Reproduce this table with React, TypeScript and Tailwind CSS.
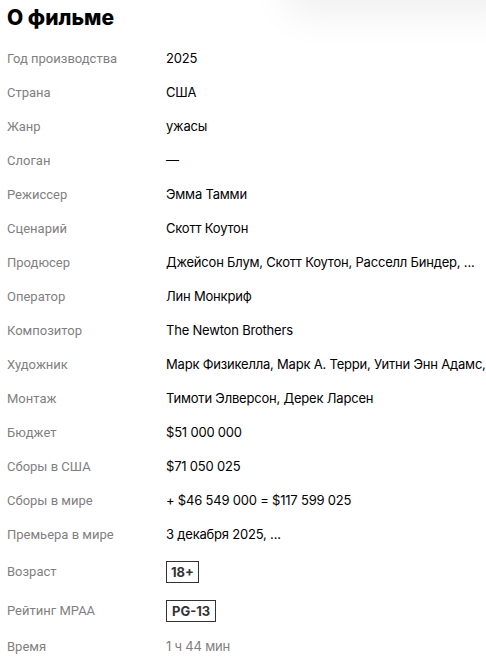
const rows: [string, string][] = [
  ["Год производства", "2025"],
  ["Страна", "США"],
  ["Жанр", "ужасы"],
  ["Слоган", "—"],
  ["Режиссер", "Эмма Тамми"],
  ["Сценарий", "Скотт Коутон"],
  ["Продюсер", "Джейсон Блум, Скотт Коутон, Расселл Биндер, ..."],
  ["Оператор", "Лин Монкриф"],
  ["Композитор", "The Newton Brothers"],
  ["Художник", "Марк Физикелла, Марк А. Терри, Уитни Энн Адамс, ..."],
  ["Монтаж", "Тимоти Элверсон, Дерек Ларсен"],
  ["Бюджет", "$51 000 000"],
  ["Сборы в США", "$71 050 025"],
  ["Сборы в мире", "+ $46 549 000 = $117 599 025"],
  ["Премьера в мире", "3 декабря 2025, ..."],
];

function Row({ label, children, h = "h-[34px]" }: { label: string; children: React.ReactNode; h?: string }) {
  return (
    <div className={`flex items-center ${h}`}>
      <div className="w-[159px] shrink-0 font-['Roboto',sans-serif] text-[13px] text-[#7f7f7f]">{label}</div>
      <div className="min-w-0 flex-1 whitespace-nowrap text-[13px] tracking-[-0.2px] text-black">{children}</div>
    </div>
  );
}

export default function App() {
  return (
    <div className="relative h-[661px] w-[486px] overflow-hidden bg-white pl-[7px] font-['Inter','Roboto',sans-serif]">
      {/* shadow from the header above */}
      <div className="absolute -top-[40px] left-[300px] -right-[20px] h-[40px] shadow-[0_0_40px_12px_rgba(0,0,0,0.07)]" />
      <h2 className="flex h-[42px] items-center pb-[6px] text-[21px] font-extrabold text-black">О фильме</h2>
      {rows.map(([l, v]) => (
        <Row key={l} label={l}>
          {v}
        </Row>
      ))}
      <Row label="Возраст" h="h-[40px]">
        <span className="inline-block border border-[#333] px-[4px] py-[2px] text-[13px] font-bold leading-[16px] tracking-normal text-[#333]">
          18+
        </span>
      </Row>
      <Row label="Рейтинг MPAA" h="h-[38px]">
        <span className="inline-block border border-[#333] px-[5px] py-[2px] text-[13px] font-bold leading-[16px] tracking-normal text-[#333]">
          PG-13
        </span>
      </Row>
      <Row label="Время">
        <span className="text-[#7f7f7f]">1 ч 44 мин</span>
      </Row>
    </div>
  );
}
